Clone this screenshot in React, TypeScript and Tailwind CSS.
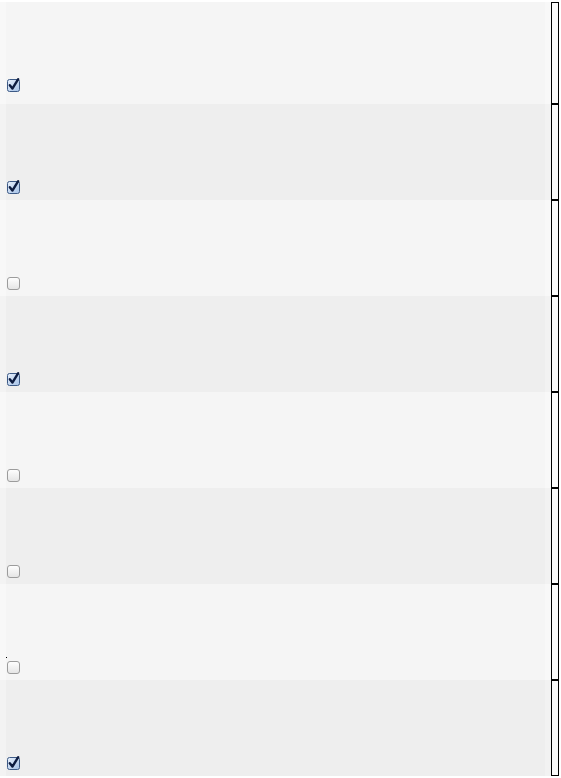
import React from 'react'

const rows = [true, true, false, true, false, false, false, true]

function Box({ checked }: { checked: boolean }) {
  if (checked) {
    return (
      <svg width="13" height="13" viewBox="0 0 13 13" className="block overflow-visible">
        <defs>
          <linearGradient id="chk" x1="0" y1="0" x2="1" y2="1">
            <stop offset="0" stopColor="#e9f1fc" />
            <stop offset="1" stopColor="#a3c0e6" />
          </linearGradient>
        </defs>
        <rect x="0.5" y="0.5" width="12" height="12" rx="2" fill="url(#chk)" stroke="#3d5a86" />
        <path d="M2.8 6.3 L5.4 9.6 L11.2 0.2" fill="none" stroke="#0d1c40" strokeWidth="2.4" strokeLinecap="round" strokeLinejoin="round" />
      </svg>
    )
  }
  return (
    <svg width="13" height="13" viewBox="0 0 13 13" className="block">
      <defs>
        <linearGradient id="unchk" x1="0" y1="0" x2="0" y2="1">
          <stop offset="0" stopColor="#ffffff" />
          <stop offset="1" stopColor="#e4e4e4" />
        </linearGradient>
      </defs>
      <rect x="0.5" y="0.5" width="12" height="12" rx="2.5" fill="url(#unchk)" stroke="#9c9c9c" />
    </svg>
  )
}

export default function App() {
  return (
    <div className="w-[561px] h-[778px] bg-white pt-[2px]">
      {rows.map((checked, i) => {
        const odd = i % 2 === 0
        return (
          <div key={i} className={i === 0 ? 'flex h-[102px]' : 'flex h-[96px]'}>
            <div className={odd ? 'w-[6px] bg-[#f8f8f8]' : 'w-[6px] bg-[#f3f3f3]'} />
            <div
              className={
                'relative flex flex-1 flex-col justify-end pl-[1px] ' +
                (i === 0 ? 'pb-[12px] ' : 'pb-[6px] ') +
                (odd ? 'bg-[#f5f5f5]' : 'bg-[#eeeeee]')
              }
            >
              {i === 6 && <span className="absolute left-0 top-[73px] h-[1px] w-[1px] bg-black" />}
              <Box checked={checked} />
            </div>
            <div className={odd ? 'w-[6px] bg-[#f8f8f8]' : 'w-[6px] bg-[#f2f2f2]'} />
            <div className="w-[8px] border border-black bg-[#fbfbfb]" />
            <div className="w-[2px] bg-white" />
          </div>
        )
      })}
    </div>
  )
}
